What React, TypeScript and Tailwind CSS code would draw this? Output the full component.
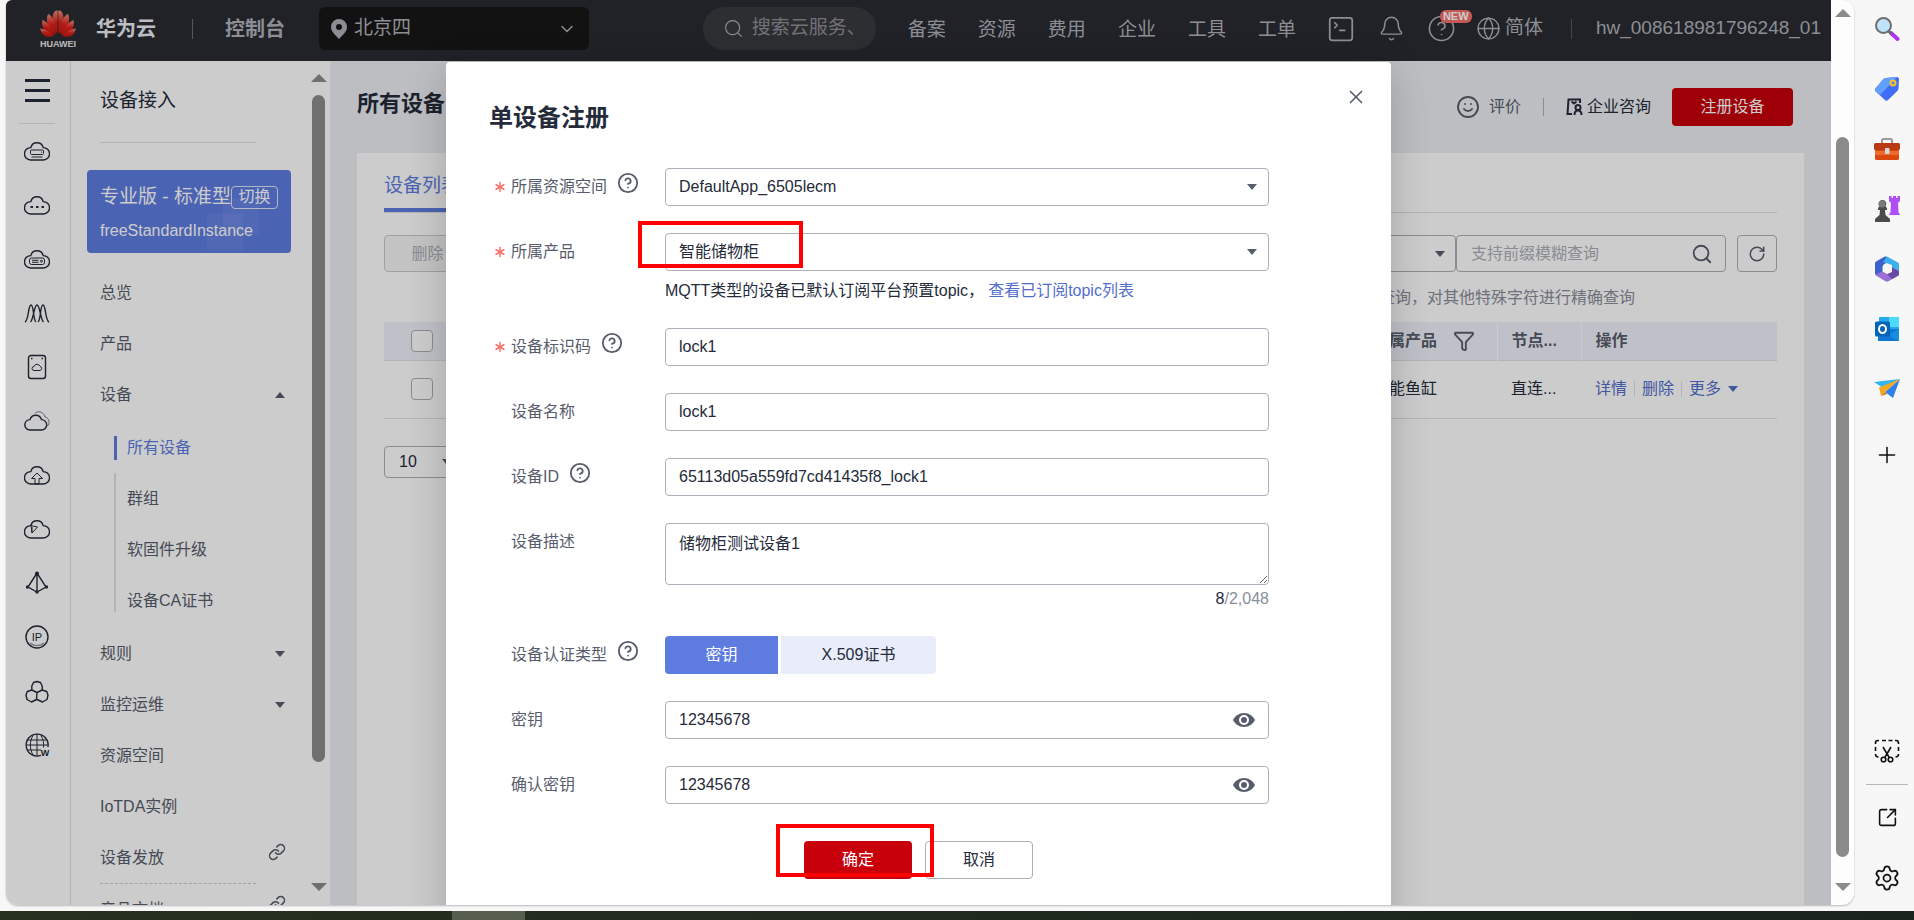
import { useState } from 'react';
import type { ReactNode } from 'react';
import {
  Asterisk,
  Bell,
  ChevronDown,
  CircleQuestionMark,
  Funnel,
  Globe,
  Link as LinkIcon,
  Plus,
  RotateCw,
  Search,
  Settings,
  Smile,
  SquareArrowOutUpRight,
  SquareTerminal,
  X,
} from 'lucide-react';

const NAV_ITEMS = ['备案', '资源', '费用', '企业', '工具', '工单'];

const CLOUD = 'M6.5 22a6.200 6.200 0 0 1 .3-12.400 6.400 6.400 0 0 1 12.400 0 6.200 6.200 0 0 1 .3 12.400z';

const SERVICE_ICONS: ReactNode[] = [
  <>
    <path d={CLOUD} />
    <g strokeWidth="1">
      <rect x="6.500" y="12" width="13" height="4.500" rx="1" />
      <path d="M17 14.200h1M7.500 19h11" />
    </g>
  </>,
  <>
    <path d={CLOUD} />
    <path d="M6.500 15H9M12 15h2.500M17.500 15H20" strokeWidth="2.200" />
  </>,
  <>
    <path d={CLOUD} />
    <g strokeWidth="1">
      <rect x="5.500" y="12" width="15" height="6.500" rx="2" />
      <path d="M8 14.300h6.500M8 16.300h6.500" />
      <circle cx="17.500" cy="15.200" r="1" />
    </g>
  </>,
  <path d="M1 22C5 20 4 5 7 5s2 15 5 17M6.500 22c3-2 3.500-17 6.500-17s3.500 15 6.500 17M14 22c3-2 2-17 5-17s2 15 6 17" />,
  <>
    <rect x="4.500" y="1.500" width="17" height="23" rx="2.500" />
    <path d="M10 16.500a2 2 0 0 1 0-4 3.200 3.200 0 0 1 6-.2 2.200 2.200 0 0 1 .2 4.200z" strokeWidth="1" />
    <path d="M7 4.500h1.500M17.500 4.500H19" strokeWidth="1.600" />
  </>,
  <>
    <path d="M6 22a5.200 5.200 0 0 1 0-10.400 6 6 0 0 1 11.500 0A5.200 5.200 0 0 1 17.500 22z" />
    <path d="M11 5.500C14 2 20 4 21 9c4.500 1 5.500 6.500 2 9.500" strokeWidth="1" opacity=".6" />
  </>,
  <>
    <path d={CLOUD} />
    <path d="m13 11-5.500 5.500H11V22h4v-5.500h3.500z" strokeWidth="1" />
  </>,
  <>
    <path d={CLOUD} />
    <path d="M7 9.600 13.500 11 8 17zM8 17V11" strokeWidth="1" />
  </>,
  <>
    <path d="m13 3-9 14 9 5 9-5zM13 3v19" />
    <circle cx="13" cy="3.500" r="1.300" fill="currentColor" />
    <circle cx="3.500" cy="17" r="1" fill="#fff" />
    <circle cx="22.500" cy="17" r="1" fill="#fff" />
    <circle cx="13" cy="22" r="1" fill="#fff" />
  </>,
  <>
    <circle cx="13" cy="13" r="11" />
    <path d="M6 19c4 3.500 10 3.500 14 0" opacity=".5" />
    <text x="13" y="17" textAnchor="middle" fontSize="11" fill="currentColor" stroke="none">
      IP
    </text>
  </>,
  <path
    strokeLinejoin="round"
    d="M13 3.500l3.500 1 1.700 3.500v4L13 14.500 7.800 12V8l1.700-3.500zM7.800 12l-4.500 1.500L2 17l1 4.500L7.500 24l5-2.500.5-7M18.200 12l4.500 1.500L24 17l-1 4.500-4.500 2.500-5.500-2.500"
  />,
  <>
    <path d="M17 23.400a11 11 0 1 1 7-8.400" />
    <path d="M13 2v22M3.500 8h19M2 13h22M3.500 18H17M9 3.500C5.500 9 5.500 17 9 23M17 3.500c2.500 4 3 8 2.500 12" strokeWidth="1" />
    <text x="21" y="24" textAnchor="middle" fontSize="9" fontWeight="700" fill="currentColor" stroke="none">
      W
    </text>
  </>,
];

const SUB_MENU = ['所有设备', '群组', '软固件升级', '设备CA证书'];

function Caret({ up = false, className = 'text-[#575d6c]' }: { up?: boolean; className?: string }) {
  return (
    <svg width="10" height="6" viewBox="0 0 10 6" fill="currentColor" className={className}>
      <path d={up ? 'M5 0l5 6H0z' : 'M0 0h10L5 6z'} />
    </svg>
  );
}

function Scrollbar({ before, thumb, after, className }: { before: number; thumb: number; after: number; className: string }) {
  return (
    <div className={`flex w-[23px] shrink-0 flex-col items-center text-[#8b8b8b] ${className}`}>
      <svg width="16" height="8" viewBox="0 0 16 8" fill="currentColor">
        <path d="M8 0l8 8H0z" />
      </svg>
      <div className="my-2 flex flex-1 flex-col">
        <div style={{ flexGrow: before }} />
        <div className="w-[13px] rounded-full bg-[#8b8b8b]" style={{ flexGrow: thumb }} />
        <div style={{ flexGrow: after }} />
      </div>
      <svg width="16" height="8" viewBox="0 0 16 8" fill="currentColor">
        <path d="M0 0h16L8 8z" />
      </svg>
    </div>
  );
}

function HuaweiLogo() {
  return (
    <svg width="36" height="38" viewBox="0 0 36 38">
      <defs>
        <linearGradient id="petal" x1="0" y1="0" x2="0" y2="1">
          <stop offset="0" stopColor="#f0907a" />
          <stop offset=".5" stopColor="#e0231c" />
          <stop offset="1" stopColor="#c81512" />
        </linearGradient>
      </defs>
      <g fill="url(#petal)">
        <path d="M17.500 24C11 15 11 3 16 0.500c1.500-.3 1.700 0 1.700 1z" />
        <path d="M18.500 24C25 15 25 3 20 0.500c-1.500-.3-1.700 0-1.700 1z" />
        <path d="M16 24.500C8 19 5 11 8 4c4 1 8 9 8 20.500z" />
        <path d="M20 24.500C28 19 31 11 28 4c-4 1-8 9-8 20.500z" />
        <path d="M14.800 25C6 24 .5 18 2.500 10c5 2 10 8 12.300 15z" />
        <path d="M21.200 25C30 24 35.500 18 33.500 10c-5 2-10 8-12.300 15z" />
        <path d="M14 26C6 28.500 1 25 .3 18.500 5 19 10 22 14 26z" />
        <path d="M22 26c8 2.500 13-1 13.700-7.500C31 19 26 22 22 26z" />
      </g>
      <text x="18" y="37" textAnchor="middle" fontSize="9" fontWeight="700" fill="#e8e8e8">
        HUAWEI
      </text>
    </svg>
  );
}

function TopBar() {
  return (
    <header className="flex h-[61px] shrink-0 items-center bg-[#282b33] pb-1 pl-[34px] pr-[10px] text-[19px] text-[#b0b2b8]">
      <a href="#home" className="flex items-center gap-5 text-[20px] font-bold text-[#eceef2]">
        <HuaweiLogo />
        华为云
      </a>
      <span className="ml-9 h-5 w-px bg-[#6a6c73]" />
      <a href="#console" className="ml-8 text-[20px] font-bold">控制台</a>
      <button type="button" className="ml-[34px] flex h-[43px] w-[270px] items-center rounded-md bg-[#171717] px-3">
        <svg width="16" height="20" viewBox="0 0 16 20" fill="currentColor" fillRule="evenodd">
          <path d="M8 0a8 8 0 0 0-8 8c0 5 5 8.500 8 12 3-3.500 8-7 8-12a8 8 0 0 0-8-8zm0 5a3 3 0 1 1 0 6 3 3 0 0 1 0-6z" />
        </svg>
        <span className="ml-[7px] flex-1 text-left">北京四</span>
        <ChevronDown size={20} strokeWidth={1.8} />
      </button>

      <label className="ml-auto flex h-[43px] w-[173px] items-center rounded-full bg-[#393a3f] pl-5">
        <Search size={21} strokeWidth={1.3} className="shrink-0" />
        <input
          aria-label="搜索"
          placeholder="搜索云服务、"
          className="ml-2 w-[116px] bg-transparent placeholder:text-[#8d8f95] focus:outline-none"
        />
      </label>
      <nav className="ml-8 flex gap-8 pt-[3px]">
        {NAV_ITEMS.map((item) => (
          <a key={item} href={`#${item}`}>{item}</a>
        ))}
      </nav>
      <button type="button" aria-label="CloudShell" className="ml-[30px]">
        <SquareTerminal size={30} strokeWidth={1.4} />
      </button>
      <button type="button" aria-label="消息" className="ml-[22px]">
        <Bell size={27} strokeWidth={1.3} />
      </button>
      <button type="button" aria-label="帮助" className="relative ml-[22px]">
        <CircleQuestionMark size={29} strokeWidth={1.3} />
        <span className="absolute -top-1 left-[13px] rounded-md bg-[#f66f6a] px-[3px] text-[11px] font-semibold leading-[13px] text-white">
          NEW
        </span>
      </button>
      <button type="button" className="ml-5 flex items-center gap-1">
        <Globe size={25} strokeWidth={1.3} />
        简体
      </button>
      <span className="ml-7 h-5 w-px bg-[#55575e]" />
      <a href="#account" className="ml-6">hw_008618981796248_01</a>
    </header>
  );
}

function ServiceRail() {
  return (
    <div className="flex w-[65px] shrink-0 flex-col items-center border-r border-[#dfe1e6] pr-[2px] text-[#252b3a]">
      <button type="button" aria-label="服务列表" className="mt-[18px] flex flex-col gap-[7px]">
        <span className="h-[3px] w-[25px] bg-[#252b3a]" />
        <span className="h-[3px] w-[25px] bg-[#252b3a]" />
        <span className="h-[3px] w-[25px] bg-[#252b3a]" />
      </button>
      <span className="mt-[21px] h-px w-9 bg-[#dfe1e6]" />
      <div className="mt-[14px] flex flex-col gap-7">
        {SERVICE_ICONS.map((icon, i) => (
          <svg key={i} width="26" height="26" viewBox="0 0 26 26" fill="none" stroke="currentColor" strokeWidth="1.4">
            {icon}
          </svg>
        ))}
      </div>
    </div>
  );
}

function MenuItem({ label, suffix }: { label: string; suffix?: ReactNode }) {
  return (
    <a href={`#${label}`} className="flex h-[51px] items-center justify-between pr-[22px]">
      {label}
      {suffix}
    </a>
  );
}

function SideMenu() {
  return (
    <aside className="flex w-[259px] shrink-0 bg-white text-base text-[#575d6c]">
      <div className="min-w-0 flex-1 overflow-hidden pl-4">
        <div className="ml-[13px] flex h-[82px] w-[156px] items-center border-b border-[#dfe1e6] text-[19px] text-[#252b3a]">
          设备接入
        </div>
        <div className="relative mt-[27px] flex h-[83px] w-[204px] flex-col justify-center gap-2 rounded-sm bg-[#5e7ce0] pl-[13px] pt-[3px] text-white">
          <span className="absolute right-12 top-[44px] h-9 w-9 bg-white/5" />
          <span className="absolute right-8 top-7 h-9 w-9 bg-white/5" />
          <div className="flex items-center text-[19px] leading-7">
            <span className="whitespace-nowrap">专业版 - 标准型</span>
            <button type="button" className="h-[23px] w-[47px] shrink-0 rounded-sm border border-white/80 text-base leading-5">
              切换
            </button>
          </div>
          <span className="leading-6">freeStandardInstance</span>
        </div>
        <nav className="mt-[14px] pl-[13px]">
          <MenuItem label="总览" />
          <MenuItem label="产品" />
          <MenuItem label="设备" suffix={<Caret up />} />
          <div className="ml-[14px] py-[2px]">
            {SUB_MENU.map((label, i) => (
              <a key={label} href={`#${label}`} className="flex h-[51px] items-center">
                {i === 0 && <span className="mr-[10px] h-6 w-[3px] bg-[#5e7ce0]" />}
                {i > 0 && i < SUB_MENU.length - 1 && <span className="mr-[11px] h-full w-[2px] bg-[#dfe1e6]" />}
                {i === SUB_MENU.length - 1 && <span className="mb-[14px] mr-[11px] h-[37px] w-[2px] bg-[#dfe1e6]" />}
                <span className={i === 0 ? 'text-[#5e7ce0]' : ''}>{label}</span>
              </a>
            ))}
          </div>
          <MenuItem label="规则" suffix={<Caret />} />
          <MenuItem label="监控运维" suffix={<Caret />} />
          <MenuItem label="资源空间" />
          <MenuItem label="IoTDA实例" />
          <MenuItem label="设备发放" suffix={<LinkIcon size={18} className="mb-3 -mr-px" />} />
          <div className="w-[156px] border-t border-dashed border-[#c8cad0]" />
          <MenuItem label="产品文档" suffix={<LinkIcon size={18} className="mb-3 -mr-px" />} />
        </nav>
      </div>
      <Scrollbar before={5} thumb={671} after={114} className="pb-[14px] pt-[13px]" />
    </aside>
  );
}

function DeviceList() {
  return (
    <main className="flex min-w-0 flex-1 flex-col bg-[#edeef3] px-[27px] text-base text-[#575d6c]">
      <div className="flex h-[92px] items-center justify-between">
        <h1 className="pb-2 text-[22px] font-bold text-[#252b3a]">所有设备</h1>
        <div className="flex items-center pr-[11px]">
          <button type="button" className="flex items-center gap-[9px]">
            <Smile size={24} strokeWidth={1.9} />
            评价
          </button>
          <span className="mx-[22px] h-[18px] w-px bg-[#adb0b8]" />
          <a href="#consult" className="flex items-center gap-1 text-[#252b3a]">
            <svg width="17" height="18" viewBox="0 0 17 18" fill="none" stroke="currentColor" strokeWidth="2">
              <path d="M6 16H1.500l1-14.500H14V5M5.500 3.500 8 5.500l2.500-2" />
              <circle cx="12" cy="9.500" r="2.500" />
              <path d="M8.500 17c0-3 1.500-4.500 3.500-4.500s3.500 1.500 3.500 4.500" />
            </svg>
            企业咨询
          </a>
          <button type="button" className="ml-[21px] h-[38px] w-[121px] rounded-sm bg-[#c7000b] text-white">
            注册设备
          </button>
        </div>
      </div>

      <section className="flex-1 bg-white px-[27px] pt-3">
        <div className="flex border-b border-[#dfe1e6]">
          <button type="button" className="h-[47px] border-b-4 border-[#5e7ce0] text-[19px] text-[#5e7ce0]">
            设备列表
          </button>
        </div>
        <div className="mt-[22px] flex h-[37px] justify-between">
          <button type="button" className="w-[87px] rounded-sm border border-[#c8cad0] bg-[#f5f5f6] text-[#adb0b8]">
            删除
          </button>
          <div className="flex">
            <button
              type="button"
              aria-label="查询条件"
              className="flex w-[160px] items-center justify-end rounded-sm border border-[#adb0b8] pr-[10px]"
            >
              <Caret />
            </button>
            <label className="flex w-[270px] items-center rounded-sm border border-[#adb0b8] pl-[14px] pr-3">
              <input
                aria-label="设备查询"
                placeholder="支持前缀模糊查询"
                className="min-w-0 flex-1 placeholder:text-[#adb0b8] focus:outline-none"
              />
              <Search size={22} strokeWidth={2} />
            </label>
            <button
              type="button"
              aria-label="刷新"
              className="ml-[11px] flex w-10 items-center justify-center rounded-sm border border-[#adb0b8]"
            >
              <RotateCw size={18} />
            </button>
          </div>
        </div>
        <p className="pr-[142px] pt-[14px] text-right leading-6 text-[#8a8e99]">查询，对其他特殊字符进行精确查询</p>
        <table className="mt-3 w-full table-fixed text-left">
          <thead>
            <tr className="h-[38px] border-b border-[#dfe1e6] bg-[#f0f2fa]">
              <th className="w-[76px] pl-[27px]">
                <input type="checkbox" aria-label="全选" className="block h-[22px] w-[22px] appearance-none rounded-sm border border-[#adb0b8] bg-white" />
              </th>
              <th />
              <th className="w-[124px] border-r border-white font-bold">
                <span className="flex items-center gap-4">
                  所属产品
                  <Funnel size={22} />
                </span>
              </th>
              <th className="w-[84px] border-r border-white pl-[14px] font-bold">节点...</th>
              <th className="w-[196px] pl-[14px] font-bold">操作</th>
            </tr>
          </thead>
          <tbody>
            <tr className="h-[58px] border-b border-[#dfe1e6] text-[#252b3a]">
              <td className="pl-[27px]">
                <input type="checkbox" aria-label="选择设备" className="block h-[22px] w-[22px] appearance-none rounded-sm border border-[#adb0b8] bg-white" />
              </td>
              <td />
              <td>智能鱼缸</td>
              <td className="pl-[14px]">直连...</td>
              <td className="pl-[14px]">
                <span className="flex items-center text-[#526ecc]">
                  <a href="#detail">详情</a>
                  <span className="mx-[7px] h-4 w-px bg-[#dfe1e6]" />
                  <a href="#delete">删除</a>
                  <span className="mx-[7px] h-4 w-px bg-[#dfe1e6]" />
                  <button type="button" className="flex items-center gap-[7px]">
                    更多
                    <Caret className="text-[#526ecc]" />
                  </button>
                </span>
              </td>
            </tr>
          </tbody>
        </table>
        <div className="relative mt-[27px] flex w-[76px] items-center">
          <select aria-label="每页条数" className="h-8 w-full appearance-none rounded-sm border border-[#adb0b8] pl-[14px] text-[#252b3a]">
            <option>10</option>
          </select>
          <Caret className="pointer-events-none absolute right-2 text-[#575d6c]" />
        </div>
      </section>
    </main>
  );
}

const CONTROL = 'block h-[38px] w-full rounded-sm border border-[#adb0b8] bg-white px-[13px] text-base text-[#252b3a] focus:outline-none';

type FieldProps = {
  id: string;
  label: string;
  required?: boolean;
  help?: boolean;
  children: ReactNode;
};

function Field({ id, label, required, help, children }: FieldProps) {
  return (
    <div className="grid grid-cols-[176px_minmax(0,604px)]">
      <div className="flex h-[38px] items-center">
        <span className="flex w-[22px] justify-center">
          {required && <Asterisk size={18} className="text-[#f66f6a]" />}
        </span>
        <label htmlFor={id}>{label}</label>
        {help && <CircleQuestionMark size={22} className="mb-2 ml-[10px]" />}
      </div>
      <div>{children}</div>
    </div>
  );
}

function SelectBox({ id, value }: { id: string; value: string }) {
  return (
    <div className="relative flex items-center">
      <select id={id} className={`${CONTROL} appearance-none`}>
        <option>{value}</option>
      </select>
      <Caret className="pointer-events-none absolute right-3 text-[#575d6c]" />
    </div>
  );
}

function SecretInput({ id, value }: { id: string; value: string }) {
  return (
    <div className="relative flex items-center">
      <input id={id} defaultValue={value} className={CONTROL} />
      <button type="button" aria-label="显示密钥" className="absolute right-[14px] text-[#575d6c]">
        <svg width="22" height="14" viewBox="0 0 22 14" fill="currentColor" fillRule="evenodd">
          <path d="M11 0C6 0 2 3 0 7c2 4 6 7 11 7s9-3 11-7c-2-4-6-7-11-7zm0 2a5 5 0 1 1 0 10 5 5 0 0 1 0-10zm0 2a3 3 0 1 0 0 6 3 3 0 0 0 0-6z" />
        </svg>
      </button>
    </div>
  );
}

function RegisterDialog() {
  const [desc, setDesc] = useState('储物柜测试设备1');

  return (
    <div
      role="dialog"
      aria-labelledby="dialog-title"
      className="w-[945px] shrink-0 rounded-t-sm bg-white pb-[100px] text-base text-[#575d6c] shadow-[0_8px_40px_rgba(0,0,0,0.2)]"
    >
      <div className="flex items-start justify-between pl-[43px] pr-6 pt-6">
        <h2 id="dialog-title" className="mt-3 text-[24px] font-bold leading-10 text-[#252b3a]">
          单设备注册
        </h2>
        <button type="button" aria-label="关闭">
          <X size={22} strokeWidth={1.8} />
        </button>
      </div>

      <form className="mt-[30px] flex flex-col gap-[27px] pl-[43px]">
        <Field id="space" label="所属资源空间" required help>
          <SelectBox id="space" value="DefaultApp_6505lecm" />
        </Field>
        <Field id="product" label="所属产品" required>
          <div className="relative">
            <SelectBox id="product" value="智能储物柜" />
            <span className="pointer-events-none absolute -left-[27px] -top-3 h-[47px] w-[165px] border-4 border-[#ff0000]" />
          </div>
          <p className="pt-[10px] leading-5 text-[#252b3a]">
            MQTT类型的设备已默认订阅平台预置topic，
            <a href="#topics" className="ml-1 text-[#526ecc]">查看已订阅topic列表</a>
          </p>
        </Field>
        <Field id="node" label="设备标识码" required help>
          <input id="node" defaultValue="lock1" className={CONTROL} />
        </Field>
        <Field id="name" label="设备名称">
          <input id="name" defaultValue="lock1" className={CONTROL} />
        </Field>
        <Field id="device-id" label="设备ID" help>
          <input id="device-id" defaultValue="65113d05a559fd7cd41435f8_lock1" className={CONTROL} />
        </Field>
        <Field id="desc" label="设备描述">
          <textarea
            id="desc"
            value={desc}
            onChange={(e) => setDesc(e.target.value)}
            className="block h-[62px] w-full resize-y rounded-sm border border-[#adb0b8] px-[13px] py-2 text-[#252b3a] focus:outline-none"
          />
          <p className="pt-1 text-right leading-5 text-[#8a8e99]">
            <span className="text-[#252b3a]">{desc.length}</span>/2,048
          </p>
        </Field>
        <Field id="auth" label="设备认证类型" help>
          <div id="auth" className="flex h-[38px] gap-[3px]">
            <button type="button" className="w-[113px] rounded-l-sm bg-[#5e7ce0] text-white">密钥</button>
            <button type="button" className="w-[155px] rounded-r-sm bg-[#e9edfa] text-[#252b3a]">X.509证书</button>
          </div>
        </Field>
        <Field id="secret" label="密钥">
          <SecretInput id="secret" value="12345678" />
        </Field>
        <Field id="secret-confirm" label="确认密钥">
          <SecretInput id="secret-confirm" value="12345678" />
        </Field>
        <div className="flex justify-center gap-[13px] pr-[43px] pt-[10px]">
          <div className="relative">
            <button type="button" className="h-[38px] w-[108px] rounded-sm bg-[#c7000b] text-white">确定</button>
            <span className="pointer-events-none absolute -left-7 -top-[17px] z-10 h-[53px] w-[158px] border-4 border-[#ff0000]" />
          </div>
          <button type="button" className="h-[38px] w-[108px] rounded-sm border border-[#adb0b8] text-[#252b3a]">取消</button>
        </div>
      </form>
    </div>
  );
}

const EDGE_APPS: { label: string; icon: ReactNode }[] = [
  {
    label: '搜索',
    icon: (
      <>
        <path d="m17 17 6.500 6" stroke="#b031f0" strokeWidth="4" strokeLinecap="round" />
        <path d="m14.500 15 3 3" stroke="#666" strokeWidth="2.500" />
        <circle cx="9.500" cy="9.500" r="7.500" fill="#bfe3fa" stroke="#6e6e6e" strokeWidth="2" />
      </>
    ),
  },
  {
    label: '购物',
    icon: (
      <>
        <path d="M12 2 23 1c1 0 2 1 2 2l-.5 9c0 1-.4 2-1 2.700L14 24c-1 1-2 1-3 0L1.700 15.500c-1-1-1-2-.3-3L9.500 3c.7-.6 1.500-1 2.500-1z" fill="#3f6df5" />
        <path d="M12 2 23 1 6 19l-4.300-3.500c-1-1-1-2-.3-3L9.500 3c.7-.6 1.500-1 2.500-1z" fill="#62a0fb" />
        <circle cx="19" cy="7" r="2.500" fill="#5b86e8" stroke="#f7c325" strokeWidth="2" />
      </>
    ),
  },
  {
    label: '工具',
    icon: (
      <>
        <path d="M8 8V4.500C8 3.500 8.500 3 9.500 3h7c1 0 1.500.5 1.500 1.500V8" fill="none" stroke="#999" strokeWidth="2" />
        <rect x="1" y="13" width="24" height="11" rx="1.500" fill="#d9480f" />
        <rect x="0" y="7" width="26" height="7" rx="1.500" fill="#b93a12" />
        <path d="M1 15h24v4H1z" fill="#ee6c2b" />
        <rect x="11" y="12" width="4.500" height="6" rx="1" fill="#d5d9dd" />
      </>
    ),
  },
  {
    label: '游戏',
    icon: (
      <>
        <path d="M15 0h2.500v2H19V0h3v2h1.500V0H26v5l-2 2 .5 9 1.500 3H15l1.500-3L17 7l-2-2z" fill="#b14df5" />
        <path d="M8.500 4a4 4 0 0 1 3 6.500l1.500 1.500v2h-2l.5 5L16 23v3H1v-3l4.500-4 .5-5H4v-2l1.500-1.500a4 4 0 0 1 3-6.500z" fill="#4b4b4b" />
        <circle cx="8" cy="8" r="3.500" fill="#7a7a7a" />
      </>
    ),
  },
  {
    label: 'Microsoft 365',
    icon: (
      <>
        <path d="M10 1 2 5.500C1.300 6 1 6.500 1 7v11l8 4V9l8-5-4-3c-1-.6-2-.6-3 0z" fill="#3b63c9" />
        <path d="M13 0.500 24 6.500c.7.500 1 1 1 1.700V18l-7-3V9L9 6z" fill="#3fb0ee" />
        <path d="M25 15v3c0 .8-.3 1.300-1 1.700l-9.500 5.600c-1 .6-2 .6-3 0L1 19l8-4 5 3z" fill="#9a6fd6" />
        <path d="M18 11.500 25 15v3c0 .8-.3 1.300-1 1.700L18 23l-5-5 5-2z" fill="#6a4aa5" />
        <path d="m13 8 4.500 2.500v5L13 18l-4.500-2.500v-5z" fill="#f7f7f7" />
      </>
    ),
  },
  {
    label: 'Outlook',
    icon: (
      <>
        <path d="M5 2c0-.6.400-1 1-1h18c.6 0 1 .4 1 1v12H5z" fill="#28a8ea" />
        <path d="M15 1h9c.6 0 1 .4 1 1v9H15z" fill="#50d9ff" />
        <path d="M4 13h21v11c0 .6-.4 1-1 1H5c-.6 0-1-.4-1-1z" fill="#0f78d4" />
        <path d="m25 13-10 6 9 6c.6 0 1-.4 1-1z" fill="#1490df" />
        <rect x="1" y="5.500" width="15" height="15" rx="1.500" fill="#0364b8" />
        <ellipse cx="8.500" cy="13" rx="3.500" ry="4" fill="none" stroke="#fff" strokeWidth="2" />
      </>
    ),
  },
  {
    label: '投递',
    icon: (
      <>
        <path d="M0 6 26 3l-17 9z" fill="#35b5f0" />
        <path d="M26 3 19 22l-8-6z" fill="#2f80ed" />
        <path d="M26 3 5 11.500 7 20l4-4z" fill="#f5a623" />
        <path d="m7 20 4-4 2 2z" fill="#c9780c" />
      </>
    ),
  },
];

function EdgeSidebar() {
  return (
    <div className="flex w-[60px] shrink-0 flex-col items-center pb-[19px] pl-[6px] pt-4 text-[#111]">
      <div className="flex flex-col gap-[34px]">
        {EDGE_APPS.map(({ label, icon }) => (
          <button key={label} type="button" aria-label={label}>
            <svg width="26" height="26" viewBox="0 0 26 26" fill="none">
              {icon}
            </svg>
          </button>
        ))}
      </div>
      <button type="button" aria-label="添加" className="mt-10">
        <Plus size={26} strokeWidth={1.4} />
      </button>
      <button type="button" aria-label="截图" className="mt-auto">
        <svg width="26" height="26" viewBox="0 0 26 26" fill="none" stroke="currentColor" strokeWidth="1.600">
          <path d="M1.500 6V5c0-1.500 1-2.500 2.500-2.500h1M8 2.500h4M14.500 2.500h4M21 2.500h1c1.500 0 2.500 1 2.500 2.500v1M1.500 9v4M24.500 9v4M1.500 16c0 2 .5 3 3 3M24.500 16c0 2-.5 3-3 3M9 9l6.500 11M17 9l-6.500 11" />
          <circle cx="9.500" cy="21.500" r="2.300" />
          <circle cx="16.500" cy="21.500" r="2.300" />
        </svg>
      </button>
      <span className="mt-5 h-px w-[42px] bg-[#b8b8b8]" />
      <button type="button" aria-label="在新窗口打开" className="mt-[22px]">
        <SquareArrowOutUpRight size={21} strokeWidth={1.8} />
      </button>
      <button type="button" aria-label="设置" className="mt-9">
        <Settings size={28} strokeWidth={1.5} />
      </button>
    </div>
  );
}

export default function App() {
  return (
    <div className="flex h-screen flex-col overflow-hidden bg-[#f7f7f7] font-['Liberation_Sans','Noto_Sans_CJK_SC',sans-serif]">
      <div className="flex min-h-0 flex-1">
        <div className="flex min-w-0 flex-1 pb-[6px] pl-[6px]">
          <div className="flex min-w-0 flex-1 overflow-hidden rounded-xl rounded-tl-md bg-[#fdfdfd] shadow-[0_1px_2px_rgba(0,0,0,0.25)]">
            <div className="relative flex min-w-0 flex-1 flex-col overflow-hidden">
              <TopBar />
              <div className="flex min-h-0 flex-1 bg-white">
                <ServiceRail />
                <SideMenu />
                <DeviceList />
              </div>
              <div className="absolute inset-0 flex items-start justify-center overflow-hidden bg-black/20 pt-[62px]">
                <RegisterDialog />
              </div>
            </div>
            <Scrollbar before={112} thumb={720} after={18} className="pb-[14px] pt-[9px]" />
          </div>
        </div>
        <EdgeSidebar />
      </div>
      <div className="h-[9px] shrink-0 bg-linear-to-r from-[#283020] to-[#1a241d]">
        <div className="ml-[452px] h-full w-[73px] bg-[#575e4f]" />
      </div>
    </div>
  );
}
